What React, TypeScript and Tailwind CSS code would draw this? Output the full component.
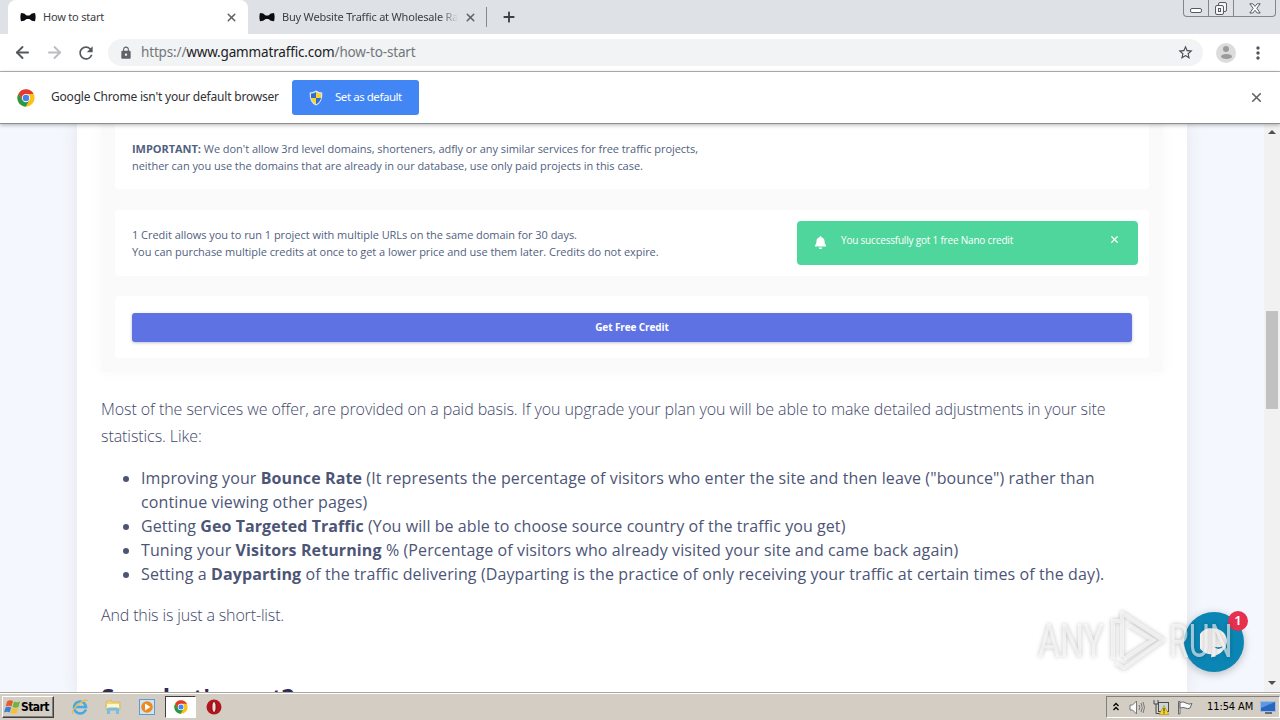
import { ArrowLeft, ArrowRight, Plus, X } from "lucide-react";
import { FaBell } from "react-icons/fa";
import { MdLock, MdMoreVert, MdRefresh, MdStarBorder } from "react-icons/md";

function BowTie() {
  return (
    <svg width="16" height="16" viewBox="0 0 16 16" className="shrink-0">
      <path
        d="M1 4 Q-.2 8 1 12.2 Q4.5 12.2 6.6 10 H9.4 Q11.5 12.2 15 12.2 Q16.2 8 15 4 Q11.5 4 9.4 6.4 H6.6 Q4.5 4 1 4Z"
        fill="#0c0d10"
      />
    </svg>
  );
}

function ChromeLogo({ size }: { size: number }) {
  return (
    <svg width={size} height={size} viewBox="0 0 48 48" className="shrink-0">
      <circle cx="24" cy="24" r="23" fill="#fbc116" />
      <path d="M24 13 H44.3 A23 23 0 0 0 4.1 12.5 L14.5 29 Z" fill="#e23b2e" />
      <path d="M4.1 12.5 A23 23 0 0 0 23 47 L33 30 L24 34 L14.5 29.5 Z" fill="#28994b" />
      <circle cx="24" cy="24" r="11" fill="#fff" />
      <circle cx="24" cy="24" r="8.6" fill="#4384f0" />
    </svg>
  );
}

function Shield() {
  return (
    <svg width="14" height="16" viewBox="0 0 14 16" className="shrink-0">
      <path d="M7 .5 Q10 2.4 13.3 2.4 Q14 12 7 15.6 Q0 12 .7 2.4 Q4 2.4 7 .5Z" fill="#dfe6ee" />
      <path d="M7 2 Q4.5 3.5 2 3.6 V8 H7Z" fill="#2f6fc4" />
      <path d="M7 2 Q9.5 3.5 12 3.6 V8 H7Z" fill="#f8d13a" />
      <path d="M2 8 Q3 12.3 7 14.3 V8Z" fill="#f8d13a" />
      <path d="M12 8 Q11 12.3 7 14.3 V8Z" fill="#2f6fc4" />
    </svg>
  );
}

function TabStrip() {
  return (
    <div className="flex h-[34px] justify-between bg-[#dee1e6] text-[11px] tracking-[-0.2px] text-[#3c4043]">
      <div className="flex">
        <div className="ml-2 flex w-[240px] items-center rounded-t-lg bg-white pr-[10px] pl-3">
          <BowTie />
          <span className="ml-[7px] flex-1">How to start</span>
          <X size={13} strokeWidth={2.8} color="#5f6368" />
        </div>
        <div className="flex w-[238px] items-center pr-[9px] pl-[11px]">
          <BowTie />
          <span className="mr-[6px] ml-[7px] flex-1 overflow-hidden mask-r-from-90% whitespace-nowrap">
            Buy Website Traffic at Wholesale Rates
          </span>
          <X size={13} strokeWidth={2.8} color="#5f6368" />
        </div>
        <div className="mt-[7px] h-5 w-px bg-[#85888d]" />
        <div className="flex items-center pl-[14px]">
          <Plus size={16} strokeWidth={2.8} color="#3c4043" />
        </div>
      </div>
      <div className="mr-1 flex h-[17px] rounded-b-[4px] border border-t-0 border-[#83868f]">
        <div className="flex w-[25px] items-end justify-center border-r border-[#83868f] pb-[3px]">
          <div className="h-[5px] w-[12px] rounded-[2px] border border-[#555a66] bg-white" />
        </div>
        <div className="flex w-[25px] justify-center border-r border-[#83868f] pt-[2px]">
          <svg width="14" height="14" viewBox="0 0 14 14" fill="#f4f5f7" stroke="#555a66">
            <rect x="4.5" y=".5" width="8" height="9" rx="1.5" />
            <rect x="1.5" y="3.5" width="8" height="9" rx="1.5" />
            <rect x="4.5" y="6.5" width="2" height="3" />
          </svg>
        </div>
        <div className="flex w-[41px] justify-center pt-[3px]">
          <svg width="12" height="11" viewBox="0 0 12 11">
            <path
              d="M.8 .8 H3.8 L6 3.4 L8.2 .8 H11.2 L7.8 5.3 L11.2 10 H8.2 L6 7.3 L3.8 10 H.8 L4.2 5.3 Z"
              fill="#fff"
              stroke="#555a66"
            />
          </svg>
        </div>
      </div>
    </div>
  );
}

function Toolbar() {
  return (
    <div className="flex h-[38px] items-center border-b border-[#b4b4b4] bg-white">
      <ArrowLeft size={19} strokeWidth={2.4} color="#55585c" className="ml-[13px]" />
      <ArrowRight size={19} strokeWidth={2.4} color="#bcbdc0" className="ml-[13px]" />
      <MdRefresh size={20} color="#55585c" className="ml-[12px]" />
      <div className="ml-[12px] flex h-[27px] w-[1095px] items-center rounded-full bg-[#f1f3f4] pr-[9px] pl-[11px]">
        <MdLock size={14} color="#5f6368" />
        <span className="mb-px ml-[8px] flex-1 text-[13.5px] tracking-[-0.16px] text-[#73777b]">
          https://<span className="text-[#202124]">www.gammatraffic.com</span>/how-to-start
        </span>
        <MdStarBorder size={17} color="#4a4d51" />
      </div>
      <div className="ml-[13px] flex size-5 flex-col items-center rounded-full bg-[#dcdcdc] pt-[3px]">
        <div className="size-[6px] rounded-full bg-[#9b9b9b]" />
        <div className="mt-[2px] h-[5px] w-[11px] rounded-[50%] bg-[#9b9b9b]" />
      </div>
      <MdMoreVert size={20} color="#55585c" className="ml-[12px]" />
    </div>
  );
}

function InfoBar() {
  return (
    <div className="relative z-10 flex h-[52px] items-center border-b border-[#8f8f8f] bg-white shadow-[0_1px_4px_rgba(0,0,0,0.3)]">
      <div className="ml-[17px]">
        <ChromeLogo size={18} />
      </div>
      <span className="mb-[2px] ml-4 w-[241px] text-[12px] tracking-[-0.2px] whitespace-nowrap text-[#303134]">
        Google Chrome isn't your default browser
      </span>
      <button className="flex h-[35px] w-[127px] items-center rounded-[3px] bg-[#4285f4] pl-[17px] text-[11.5px] text-white">
        <Shield />
        <span className="mb-px ml-3 tracking-[-0.45px]">Set as default</span>
      </button>
      <X size={15} strokeWidth={2.6} color="#5f6368" className="mr-4 ml-auto" />
    </div>
  );
}

function CreditPanels() {
  return (
    <div className="h-[248px] w-[1062px] bg-[#fafafa] px-[14px] text-[11px] leading-[16.5px] tracking-[-0.04px] text-[#525f7f] shadow-[0_0_16px_rgba(0,0,0,0.03)]">
      <div className="h-[65px] rounded-b bg-white pt-[17px] pl-[17px]">
        <p>
          <b>IMPORTANT:</b> We don't allow 3rd level domains, shorteners, adfly or any similar
          services for free traffic projects,
        </p>
        <p>
          neither can you use the domains that are already in our database, use only paid projects
          in this case.
        </p>
      </div>
      <div className="mt-[21px] flex h-[66px] justify-between rounded bg-white pt-[11px] pr-[11px] pl-[17px]">
        <div className="pt-[6px]">
          <p>1 Credit allows you to run 1 project with multiple URLs on the same domain for 30 days.</p>
          <p>
            You can purchase multiple credits at once to get a lower price and use them later.
            Credits do not expire.
          </p>
        </div>
        <div className="flex h-[44px] w-[341px] rounded-[4px] bg-[#4fd69c] pl-[17px] text-[10px] text-white">
          <FaBell size={13} className="mt-[15px]" />
          <span className="mt-[11px] ml-[14px] flex-1 tracking-[-0.2px]">
            You successfully got 1 free Nano credit
          </span>
          <X size={11} strokeWidth={2.6} className="mt-[13px] mr-[18px]" />
        </div>
      </div>
      <div className="mt-[20px] h-[62px] rounded bg-white px-[17px] pt-[17px]">
        <button className="h-[29px] w-full rounded-[3px] bg-[#5e72e4] text-[10px] font-bold tracking-[-0.1px] text-white shadow-[0_1px_3px_rgba(50,50,93,0.3)]">
          Get Free Credit
        </button>
      </div>
    </div>
  );
}

function Article() {
  return (
    <div className="h-[568px] w-[1110px] overflow-hidden bg-white px-6 font-['Open_Sans',sans-serif] text-[#525f7f] shadow-[0_0_16px_rgba(60,70,90,0.1)]">
      <CreditPanels />
      <div className="mt-[24px] text-[16px] leading-[27px] font-light tracking-[-0.07px] whitespace-nowrap text-[#42486a]">
        <p>
          Most of the services we offer, are provided on a paid basis. If you upgrade your plan you
          will be able to make detailed adjustments in your site
        </p>
        <p>statistics. Like:</p>
      </div>
      <ul className="mt-[16px] list-disc pl-10 text-[16px] leading-6 tracking-[0.11px] whitespace-nowrap text-[#4d5577]">
        <li>
          Improving your <b>Bounce Rate</b> (It represents the percentage of visitors who enter the
          site and then leave ("bounce") rather than
          <br />
          continue viewing other pages)
        </li>
        <li className="tracking-[0.07px]">
          Getting <b>Geo Targeted Traffic</b> (You will be able to choose source country of the
          traffic you get)
        </li>
        <li>
          Tuning your <b>Visitors Returning</b> % (Percentage of visitors who already visited your
          site and came back again)
        </li>
        <li>
          Setting a <b>Dayparting</b> of the traffic delivering (Dayparting is the practice of only
          receiving your traffic at certain times of the day).
        </li>
      </ul>
      <p className="mt-[16px] text-[16px] leading-[27px] font-light tracking-[-0.15px] text-[#42486a]">
        And this is just a short-list.
      </p>
      <h2 className="mt-[50px] text-[24px] leading-[36px] font-bold text-[#2f2b56]">So, what's next?</h2>
    </div>
  );
}

function ChatBubble() {
  return (
    <div className="absolute top-[488px] left-[1184px] flex size-[60px] items-center justify-center rounded-full bg-[#0b85b4] shadow-[0_2px_8px_rgba(0,0,0,0.25)]">
      <svg width="28" height="31" viewBox="0 0 30 32">
        <path d="M15 1 A14 14 0 1 0 12 28.6 V32 Q28 27 29 15 A14 14 0 0 0 15 1Z" fill="#f7f4f3" />
        <path d="M14 20 Q19 22 25 20 Q20 26 14 20Z" fill="#0b85b4" />
      </svg>
      <span className="absolute -top-px left-[44px] flex size-5 items-center justify-center rounded-full bg-[#e5304f] text-[13px] font-semibold text-white">
        1
      </span>
    </div>
  );
}

function Watermark() {
  return (
    <div className="absolute top-[484px] left-[1038px] flex h-[66px] items-center font-['Roboto',sans-serif] text-[46px] text-white/60 drop-shadow-[0_0_2px_rgba(0,0,0,0.4)]">
      <span className="w-[72px] origin-left scale-x-[0.73]">ANY</span>
      <svg width="56" height="64" viewBox="0 0 56 64" fill="none" stroke="currentColor" strokeWidth="4">
        <path d="M3 50 V12 H10" />
        <path d="M12 48 V4 L53 31 L14 59 L6 54" strokeLinejoin="round" />
        <path d="M14 50 L43 31 L19 16" />
      </svg>
      <span className="ml-[3px] origin-left scale-x-[0.7]">RUN</span>
    </div>
  );
}

function Scrollbar() {
  return (
    <div className="flex w-4 flex-col items-center justify-between bg-[#f1f1f1] pt-[6px] pb-[7px]">
      <div className="border-x-4 border-b-4 border-x-transparent border-b-[#505050]" />
      <div className="mt-[177px] mb-auto h-[98px] w-[12px] bg-[#c1c1c1]" />
      <div className="border-x-4 border-t-4 border-x-transparent border-t-[#505050]" />
    </div>
  );
}

function Taskbar() {
  return (
    <div className="flex h-7 items-center border-t border-[#aaa59c] bg-[#d4cdc4] font-['DejaVu_Sans_Condensed','DejaVu_Sans',sans-serif] text-[11px] text-black shadow-[inset_0_1px_0_#fff]">
      <div className="mt-px ml-[2px] flex h-[22px] w-[52px] items-center border border-t-white border-r-[#404040] border-b-[#404040] border-l-white pl-px shadow-[inset_-1px_-1px_0_#808080]">
        <svg width="17" height="16" viewBox="0 0 17 16" className="shrink-0">
          <path d="M3 2.5 Q6 .5 9 2 L7.5 7.5 Q5 6 1.8 7.5Z" fill="#e8592b" />
          <path d="M10 2.5 Q13 4 16 2.5 L14.5 8 Q11.5 9.5 8.5 8Z" fill="#6fb43c" />
          <path d="M1.5 8.5 Q4.5 7 7.2 8.5 L5.7 13.5 Q3 12 0 13.5Z" fill="#3b7fd0" />
          <path d="M8.2 9 Q11 10.5 14.2 9 L12.7 14 Q10 15.5 6.8 14Z" fill="#f5c02e" />
        </svg>
        <b className="text-[12px] tracking-[-0.6px]">Start</b>
      </div>
      <svg width="18" height="18" viewBox="0 0 18 18" fill="none" className="mt-px ml-[17px]">
        <path d="M15 11.5 Q13 15.5 9 15.5 A6 6 0 1 1 15 9 H5" stroke="#45a9e4" strokeWidth="2.6" />
        <path d="M2 16 Q0 12 8 6 Q16 0 16.5 3" stroke="#e7bf4c" strokeWidth="1.4" />
      </svg>
      <svg width="16" height="16" viewBox="0 0 16 16" className="mt-px ml-[16px]">
        <path d="M1 3 L6 1 L7 3 H15 V11 H1Z" fill="#f0d479" stroke="#cfae4e" strokeWidth=".6" />
        <path d="M2 5 H14 V9 H2Z" fill="#fff6c9" />
        <path d="M2 15 V10 Q2 8.5 4 8.5 H12 Q14 8.5 14 10 V15 H11 V11.5 H5 V15Z" fill="#79bde2" />
      </svg>
      <svg width="16" height="16" viewBox="0 0 16 16" className="mt-px ml-[18px]">
        <rect x=".5" y=".5" width="15" height="15" fill="#cfe4f4" stroke="#5d9bd0" />
        <circle cx="8" cy="8" r="5.8" fill="#ee8a1d" />
        <path d="M6 4.5 L11.5 8 L6 11.5Z" fill="#fff" />
      </svg>
      <div className="mt-px ml-[10px] flex h-[22px] w-[31px] items-center justify-center border border-t-[#404040] border-r-white border-b-white border-l-[#404040] bg-white">
        <ChromeLogo size={14} />
      </div>
      <svg width="16" height="16" viewBox="0 0 16 16" className="mt-px ml-[10px]">
        <circle cx="8" cy="8" r="7.5" fill="#b4141b" />
        <ellipse cx="8" cy="8" rx="2.1" ry="5.4" fill="#f3dede" stroke="#7e0a10" />
      </svg>
      <div className="mt-px ml-auto flex h-[22px] w-[174px] items-center border border-t-[#808080] border-r-white border-b-white border-l-[#808080] pr-[3px] pl-[5px]">
        <svg width="8" height="10" viewBox="0 0 8 10" fill="none" stroke="#000" strokeWidth="1.3">
          <path d="M1.5 4 L4 1.5 L6.5 4 M1.5 8 L4 5.5 L6.5 8" />
        </svg>
        <svg width="16" height="15" viewBox="0 0 16 15" fill="none" stroke="#77777a" className="ml-[9px]">
          <path d="M1 5 H3.5 L7.5 1 V14 L3.5 10 H1Z" fill="#fafafa" />
          <path d="M10 5 Q11.5 7.5 10 10 M12 3 Q14.5 7.5 12 12 M14 2 Q17 7.5 14 13" />
        </svg>
        <svg width="16" height="16" viewBox="0 0 16 16" className="ml-[8px]">
          <rect x="5.5" y="3.5" width="10" height="9" fill="#c9d4dc" stroke="#4b4b4b" />
          <path d="M1 1 V5 H5 V1 M3 5 V14.5 H8" fill="none" stroke="#4b4b4b" />
          <path d="M11 6.5 L15.8 15.5 H6.2Z" fill="#fbd52c" stroke="#a88a12" strokeWidth=".6" />
          <path d="M11 9 V12.5 M11 13.3 V14.5" stroke="#222" />
        </svg>
        <svg width="16" height="15" viewBox="0 0 16 15" fill="#fafafa" stroke="#66666a" className="ml-[8px]">
          <path d="M1.5 14 V1.5 H3 V14Z" />
          <path d="M3 2.5 Q6 1 9 3 Q12 5 15 3.5 L13 8 Q11 9.5 8.5 8 Q6 7 3 8Z" />
        </svg>
        <span className="ml-[14px] tracking-[-0.1px] whitespace-nowrap">11:54 AM</span>
        <svg width="16" height="14" viewBox="0 0 16 14" className="ml-auto shrink-0">
          <rect x=".5" y="1.5" width="15" height="10" fill="#2866c0" stroke="#9fbce0" />
          <path d="M1 2 H15 L1 8Z" fill="#5d98e0" />
          <path d="M5 13 H12" stroke="#444b5a" strokeWidth="1.5" />
        </svg>
      </div>
    </div>
  );
}

export default function App() {
  return (
    <div className="flex h-[720px] w-[1280px] flex-col overflow-hidden bg-white font-['Noto_Sans','Open_Sans',sans-serif]">
      <TabStrip />
      <Toolbar />
      <InfoBar />
      <div className="relative flex h-[568px] overflow-hidden">
        <div className="w-[1264px] bg-[#f4f7fd] pl-[77px]">
          <Article />
        </div>
        <Scrollbar />
        <ChatBubble />
        <Watermark />
      </div>
      <Taskbar />
    </div>
  );
}
